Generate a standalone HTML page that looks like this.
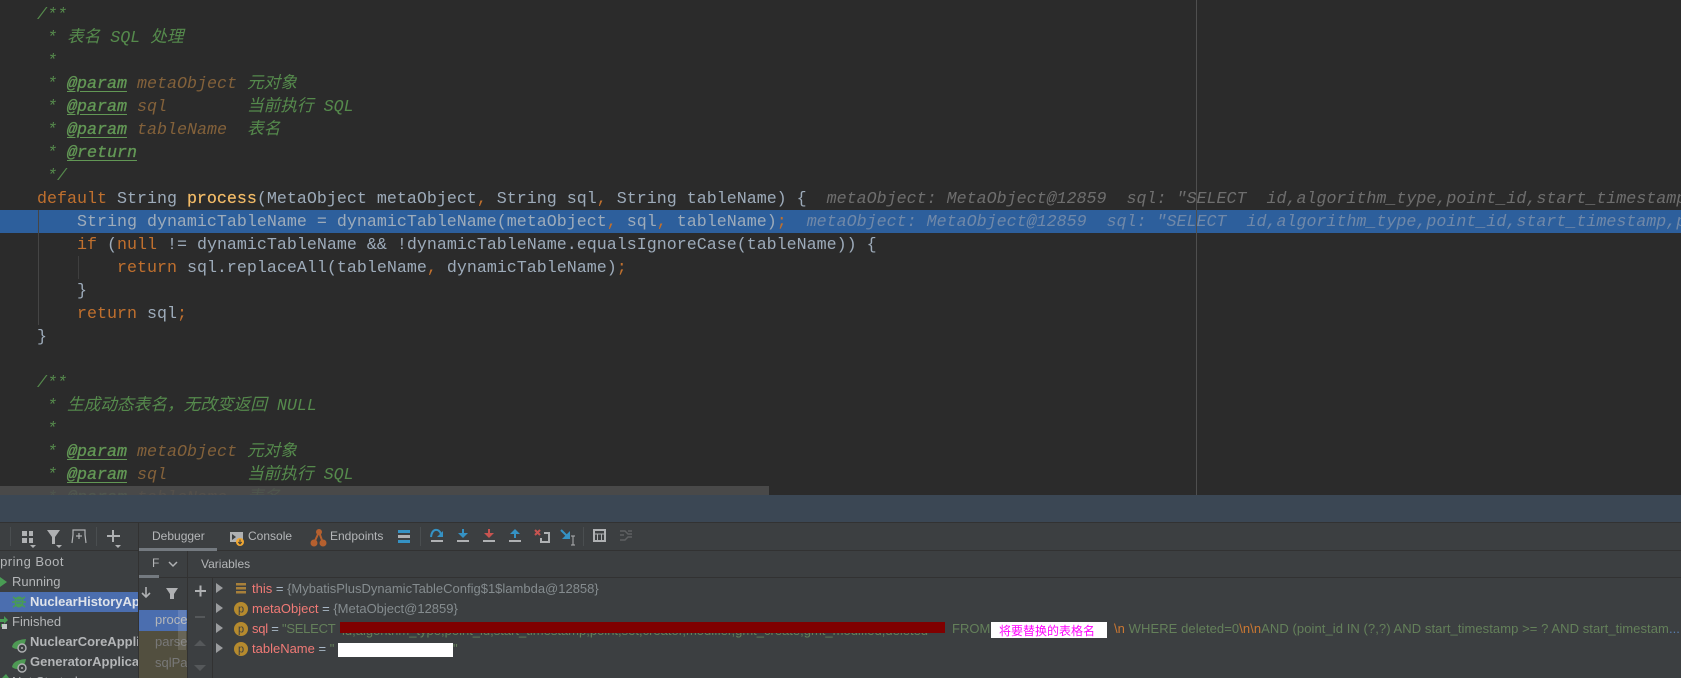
<!DOCTYPE html>
<html><head><meta charset="utf-8">
<style>
html,body{margin:0;padding:0;background:#2b2b2b}
#r{position:relative;width:1681px;height:678px;overflow:hidden;background:#2b2b2b}
.a{position:absolute}
#code{position:absolute;left:37px;top:3.5px;margin:0;font:16.67px/23.05px "Liberation Mono","Noto Sans CJK SC",monospace;color:#9dabba;white-space:pre}
.c{color:#558a4c;font-style:italic}
.t{color:#629755;font-style:italic;-webkit-text-stroke:.35px #629755;text-decoration:underline;text-underline-offset:3px}
.p{color:#83613a;font-style:italic}
.k{color:#c0702e}.f{color:#f5bd68;-webkit-text-stroke:.2px #f5bd68}
.i{color:#6e6e6e;font-style:italic}
.h{color:#7088a8;font-style:italic}
.u{font:13px/20px "Liberation Sans","Noto Sans CJK SC",sans-serif;color:#b4b6b8;white-space:nowrap}
.m{font-size:12px}
.b{font-weight:700}
.n{color:#f07a76}.e{color:#a9b7c6}.v{color:#858c8f}.s{color:#64805a}.o{color:#cc7832}
</style></head><body><div id="r">
<div class="a" style="left:0;top:210px;width:1681px;height:23px;background:#2d5f9c"></div>
<div class="a" style="left:38px;top:210px;width:1px;height:115px;background:#454545"></div>
<div class="a" style="left:78px;top:256px;width:1px;height:23px;background:#3f3f3f"></div>
<div class="a" style="left:1196px;top:0;width:1px;height:495px;background:#4f4f4f"></div>
<pre id="code"><span class="c">/**
 * 表名 SQL 处理
 *
 * </span><span class="t">@param</span> <span class="p">metaObject</span> <span class="c">元对象
 * </span><span class="t">@param</span> <span class="p">sql</span>        <span class="c">当前执行 SQL
 * </span><span class="t">@param</span> <span class="p">tableName</span>  <span class="c">表名
 * </span><span class="t">@return</span><span class="c">
 */</span>
<span class="k">default</span> String <span class="f">process</span>(MetaObject metaObject<span class="k">,</span> String sql<span class="k">,</span> String tableName) {  <span class="i">metaObject: MetaObject@12859  sql: "SELECT  id,algorithm_type,point_id,start_timestamp,point,set,creator</span>
    String dynamicTableName = dynamicTableName(metaObject<span class="k">,</span> sql<span class="k">,</span> tableName)<span class="k">;</span>  <span class="h">metaObject: MetaObject@12859  sql: "SELECT  id,algorithm_type,point_id,start_timestamp,point,set,creator</span>
    <span class="k">if</span> (<span class="k">null</span> != dynamicTableName &amp;&amp; !dynamicTableName.equalsIgnoreCase(tableName)) {
        <span class="k">return</span> sql.replaceAll(tableName<span class="k">,</span> dynamicTableName)<span class="k">;</span>
    }
    <span class="k">return</span> sql<span class="k">;</span>
}

<span class="c">/**
 * 生成动态表名，无改变返回 NULL
 *
 * </span><span class="t">@param</span> <span class="p">metaObject</span> <span class="c">元对象
 * </span><span class="t">@param</span> <span class="p">sql</span>        <span class="c">当前执行 SQL
 * </span><span class="t">@param</span> <span class="p">tableName</span>  <span class="c">表名</span></pre>
<div class="a" style="left:0;top:486px;width:769px;height:9px;background:#4d4d4d;opacity:.88"></div>
<div class="a" style="left:0;top:495px;width:1681px;height:27px;background:#3b4754"></div>
<div class="a" style="left:0;top:522px;width:1681px;height:156px;background:#3c3f41"></div>
<div class="a" style="left:0;top:522px;width:1681px;height:1px;background:#323232"></div>
<div class="a" style="left:0;top:550px;width:1681px;height:1px;background:#323232"></div>
<div class="a" style="left:139px;top:577px;width:1542px;height:1px;background:#323232"></div>
<div class="a" style="left:138px;top:523px;width:1px;height:155px;background:#323232"></div>
<div class="a" style="left:187px;top:551px;width:1px;height:127px;background:#323232"></div>
<div class="a" style="left:212px;top:578px;width:1px;height:100px;background:#323232"></div>
<div class="a" style="left:139px;top:548px;width:78px;height:3px;background:#747a80"></div>
<div class="a" style="left:139px;top:575px;width:20px;height:3px;background:#747a80"></div>
<div class="a" style="left:0;top:592px;width:138px;height:20px;background:#4b6eaf"></div>
<div class="a" style="left:139px;top:610px;width:48px;height:21px;background:#4b6eaf"></div>
<div class="a" style="left:139px;top:631px;width:48px;height:47px;background:#524f3f"></div>
<div class="a" style="left:0;top:523px;width:138px;height:155px;overflow:hidden">
<div class="a u" style="left:-9px;top:29px;letter-spacing:.45px">Spring Boot</div>
<div class="a u" style="left:12px;top:49px">Running</div>
<div class="a u b" style="left:30px;top:69px;color:#dfe3ea">NuclearHistoryApplication</div>
<div class="a u" style="left:12px;top:89px">Finished</div>
<div class="a u b" style="left:30px;top:109px">NuclearCoreApplication</div>
<div class="a u b" style="left:30px;top:129px">GeneratorApplication</div>
<div class="a u" style="left:12px;top:149px">Not Started</div>
</div>
<div class="a u m" style="left:152px;top:526px">Debugger</div>
<div class="a u m" style="left:248px;top:526px">Console</div>
<div class="a u m" style="left:330px;top:526px">Endpoints</div>
<div class="a" style="left:152px;top:553px;width:7px;height:22px;overflow:hidden"><div class="u m">Frames</div></div>
<div class="a u m" style="left:201px;top:554px">Variables</div>
<div class="a" style="left:139px;top:610px;width:48px;height:68px;overflow:hidden">
<div class="a u" style="left:16px;top:0">process</div>
<div class="a u" style="left:16px;top:22px;color:#787878">parse</div>
<div class="a u" style="left:16px;top:43px;color:#787878">sqlParse</div>
</div>
<div class="a" style="left:178px;top:610px;width:8px;height:40px;background:rgba(255,255,255,.13)"></div>
<div class="a u" style="left:252px;top:579px"><span class="n">this</span> <span class="e">=</span> <span class="v">{MybatisPlusDynamicTableConfig$1$lambda@12858}</span></div>
<div class="a u" style="left:252px;top:599px"><span class="n">metaObject</span> <span class="e">=</span> <span class="v">{MetaObject@12859}</span></div>
<div class="a u" style="left:252px;top:619px;letter-spacing:-.25px"><span class="n">sql</span> <span class="e">=</span> <span class="s">"SELECT</span></div>
<div class="a u s" style="left:342px;top:621px;width:603px;overflow:hidden">id,algorithm_type,point_id,start_timestamp,point,set,creator,modifier,gmt_create,gmt_modified,deleted</div>
<div class="a" style="left:340px;top:622px;width:605px;height:11px;background:#800000"></div>
<div class="a u s" style="left:952px;top:619px">FROM</div>
<div class="a" style="left:991px;top:622px;width:116px;height:16px;background:#fff;overflow:hidden"><span class="a" style="left:8px;top:-1px;font:12px/20px 'Noto Sans CJK SC',sans-serif;color:#f0f;white-space:nowrap">将要替换的表格名</span></div>
<div class="a u" style="left:1114px;top:619px;width:567px;overflow:hidden;letter-spacing:.07px"><span class="o">\n</span> <span class="s">WHERE deleted=0</span><span class="o">\n\n</span><span class="s">AND (point_id IN (?,?) AND start_timestamp &gt;= ? AND start_timestam</span><span style="color:#5a7fb0">...</span></div>
<div class="a u" style="left:252px;top:639px"><span class="n">tableName</span> <span class="e">=</span> <span class="s">"</span></div>
<div class="a u s" style="left:453px;top:639px">"</div>
<div class="a" style="left:338px;top:643px;width:115px;height:14px;background:#fff"></div>
<svg class="a" style="left:0;top:0" width="1681" height="678" viewBox="0 0 1681 678">
<g fill="#4a4e50"><rect x="10" y="527" width="1" height="19"/><rect x="96" y="527" width="1" height="19"/><rect x="420" y="527" width="1" height="19"/><rect x="583" y="527" width="1" height="19"/></g>
<g fill="#afb1b3">
<rect x="22" y="531" width="5" height="5"/><rect x="29" y="531" width="4" height="5"/><rect x="22" y="538" width="5" height="5"/><rect x="29" y="538" width="4" height="5"/>
<path d="M30 545h6l-3 3zM56 545h6l-3 3zM115 545h6l-3 3z"/>
<path d="M47 530h13l-5 7v7h-3v-7z"/>
<rect x="107" y="535" width="13" height="2"/><rect x="112" y="530" width="2" height="12"/>
</g>
<path d="M72 543l1-8v-5h12v5l1 8M76 536h6M79 533v6" fill="none" stroke="#afb1b3" stroke-width="1.2"/>
<path d="M0 577l7 5-7 5z" fill="#499c54"/>
<g fill="#499c54"><ellipse cx="19" cy="602" rx="4.5" ry="5.5"/><path d="M13 597l3 2M25 597l-3 2M12 602h3M26 602h-3M13 607l3-2M25 607l-3-2" stroke="#499c54" stroke-width="1.5"/></g>
<path d="M16 600h6M16 603h6" stroke="#4b6eaf" stroke-width="1"/>
<path d="M0 619h4v-3l4 4-4 4v-2H0z" fill="#499c54"/>
<rect x="1" y="624" width="3" height="3" fill="#499c54"/><rect x="2" y="624" width="5" height="5" fill="#c4c6c8"/>
<g><path d="M12 647c1-5 5-7 14-8-1 6-4 10-9 10-2 0-4-1-5-2z" fill="#4e9a54"/><circle cx="22" cy="648" r="4" fill="#3c3f41" stroke="#afb1b3" stroke-width="1.4"/><circle cx="22" cy="648" r="1" fill="#afb1b3"/></g>
<g><path d="M12 667c1-5 5-7 14-8-1 6-4 10-9 10-2 0-4-1-5-2z" fill="#4e9a54"/><circle cx="22" cy="668" r="4" fill="#3c3f41" stroke="#afb1b3" stroke-width="1.4"/><circle cx="22" cy="668" r="1" fill="#afb1b3"/></g>
<path d="M2 678l4-4 3 4z" fill="#499c54"/>
<path d="M230 532h13v10h-13z" fill="#afb1b3"/><path d="M232 534l4 3-4 3z" fill="#3c3f41"/>
<circle cx="240" cy="542" r="4" fill="#f0a732"/><path d="M240 539.5v4M238.3 542l1.7 2 1.7-2" stroke="#3c3f41" fill="none"/>
<g fill="#b5602f"><circle cx="319" cy="532" r="3"/><circle cx="314" cy="543" r="3.5"/><circle cx="323" cy="543" r="3.5"/></g>
<path d="M319 532l-5 11M319 532l4 11" stroke="#b5602f" stroke-width="2"/>
<path d="M398 530h12v3h-12z" fill="#3592c4"/><path d="M398 535h12v3h-12z" fill="#afb1b3"/><path d="M398 540h12v3h-12z" fill="#3592c4"/>
<g fill="#afb1b3"><rect x="431" y="540" width="12" height="2"/><rect x="457" y="540" width="12" height="2"/><rect x="483" y="540" width="12" height="2"/><rect x="509" y="540" width="12" height="2"/></g>
<path d="M431 537c1-9 8-9 10-3" fill="none" stroke="#3592c4" stroke-width="2"/><path d="M443 531v6h-6z" fill="#3592c4"/>
<path d="M463 529v7" stroke="#3592c4" stroke-width="2"/><path d="M458 533h10l-5 5z" fill="#3592c4"/>
<path d="M489 529v7" stroke="#c75450" stroke-width="2"/><path d="M484 533h10l-5 5z" fill="#c75450"/>
<path d="M515 531v7" stroke="#3592c4" stroke-width="2"/><path d="M510 534h10l-5-5z" fill="#3592c4"/>
<path d="M535 530l5 5M540 530l-5 5" stroke="#c75450" stroke-width="2"/>
<path d="M544 533h5v9h-8v-4" fill="none" stroke="#afb1b3" stroke-width="2"/>
<path d="M561 530l7 7" stroke="#3592c4" stroke-width="2"/><path d="M570 531v8h-8z" fill="#3592c4"/>
<path d="M571 536h4M573 536v9M571 545h4" fill="none" stroke="#afb1b3"/>
<rect x="594" y="530" width="11" height="11" fill="none" stroke="#afb1b3" stroke-width="2"/><path d="M594 534h11M597.5 534v7M601.500 534v7" stroke="#afb1b3"/>
<path d="M620 531h5l3 3h4M620 540h5l3-3h4M620 535h4M628 531h4" fill="none" stroke="#5f6163" stroke-width="1.400"/>
<path d="M146 587v10M142 593l4 4 4-4" fill="none" stroke="#afb1b3" stroke-width="1.600"/>
<path d="M166 588h12l-4 6v5h-4v-5z" fill="#afb1b3"/>
<path d="M169 562l4 4 4-4" fill="none" stroke="#afb1b3" stroke-width="1.500"/>
<rect x="195" y="590" width="11" height="2" fill="#afb1b3"/><rect x="199.500" y="585.500" width="2" height="11" fill="#afb1b3"/>
<rect x="195" y="616" width="10" height="2" fill="#55585a"/>
<path d="M194 646l6-6 6 6zM194 665l6 6 6-6z" fill="#55585a"/>
<path d="M216 583l7 5-7 5zM216 603l7 5-7 5zM216 623l7 5-7 5zM216 643l7 5-7 5z" fill="#9a9c9e"/>
<g fill="#a8803a"><rect x="236" y="583" width="10" height="2.500"/><rect x="236" y="587" width="10" height="2.500"/><rect x="236" y="591" width="10" height="2.500"/></g>
<g fill="#b58a2e"><circle cx="241" cy="609" r="7"/><circle cx="241" cy="629" r="7"/><circle cx="241" cy="649" r="7"/></g>
<g font-family="Liberation Sans,sans-serif" font-size="11" fill="#3c3f41" text-anchor="middle"><text x="241" y="612.500">p</text><text x="241" y="632.500">p</text><text x="241" y="652.500">p</text></g>
</svg>
</div></body></html>
